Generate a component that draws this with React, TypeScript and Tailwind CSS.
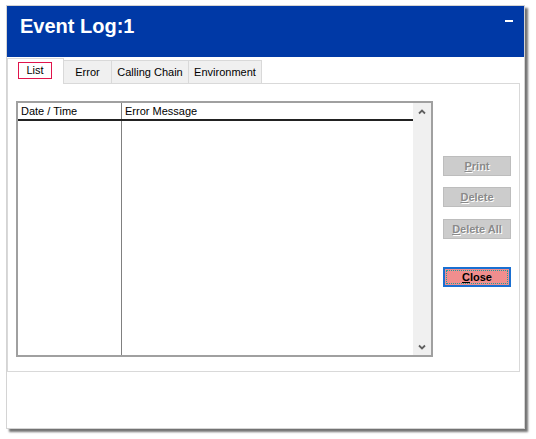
import React from 'react';

const font = { fontFamily: '"Liberation Sans", Arial, sans-serif' };

const Chevron = ({ down }: { down?: boolean }) => (
  <svg width="8" height="6" viewBox="0 0 8 6" className="block">
    <path
      d={down ? 'M1 1.5 L4 4.5 L7 1.5' : 'M1 4.5 L4 1.5 L7 4.5'}
      fill="none"
      stroke="#606060"
      strokeWidth="1.8"
    />
  </svg>
);

const DisabledButton = ({ first, rest }: { first: string; rest: string }) => (
  <button
    disabled
    className="w-[68px] h-[20px] bg-[#cccccc] border border-[#bdbdbd] text-[11px] font-bold text-[#8a8a8a] leading-none [text-shadow:1px_1px_0_#ffffff]"
  >
    <span className="underline">{first}</span>
    {rest}
  </button>
);

const tabs = ['Error', 'Calling Chain', 'Environment'];
const tabWidths = ['w-[49px]', 'w-[78px]', 'w-[74px]'];

export default function App() {
  return (
    <div className="w-[536px] h-[439px] bg-white pt-[5px] pl-[6px]" style={font}>
      <div className="w-[519px] h-[424px] border border-[#d4d4d4] bg-white flex flex-col shadow-[3px_3px_2px_rgba(0,0,0,0.55)]">
        {/* title bar */}
        <div className="h-[51px] bg-[#0039a6] flex justify-between items-start pl-[13px] pr-[11px]">
          <div className="pt-[8px] text-[20px] leading-[24px] font-bold text-white">Event Log:1</div>
          <div className="mt-[14px] w-[8px] h-[2px] bg-white" />
        </div>

        {/* tabs */}
        <div className="h-[26px] flex items-end">
          <div className="relative z-10 -mb-px h-[26px] w-[57px] bg-white border border-b-0 border-[#d9d9d9] flex items-start pt-[3px] pl-[10px]">
            <div className="w-[34px] h-[17px] border border-[#e0144c] flex items-center justify-center text-[11px] text-black">
              List
            </div>
          </div>
          {tabs.map((t, i) => (
            <div
              key={t}
              className={`${tabWidths[i]} -ml-px h-[23px] bg-[#f0f0f0] border border-b-0 border-[#d9d9d9] flex items-center justify-center text-[11px] text-black`}
            >
              {t}
            </div>
          ))}
        </div>

        {/* tab panel */}
        <div className="w-[513px] h-[289px] border border-[#d9d9d9] flex pt-[17px] pl-[8px] pb-[14px]">
          <div className="w-[417px] h-[256px] border-2 border-[#a0a0a0] flex">
            <div className="flex-1 flex flex-col">
              <div className="h-[18px] flex border-b-2 border-[#222222] text-[11px] text-black">
                <div className="w-[104px] border-r border-[#808080] pl-[3px] flex items-center">Date / Time</div>
                <div className="flex-1 pl-[3px] flex items-center">Error Message</div>
              </div>
              <div className="flex-1 flex">
                <div className="w-[104px] border-r border-[#808080]" />
                <div className="flex-1" />
              </div>
            </div>
            <div className="w-[18px] bg-[#f0f0f0] flex flex-col justify-between items-center pt-[6px] pb-[5px]">
              <Chevron />
              <Chevron down />
            </div>
          </div>

          <div className="ml-[10px] pt-[55px] flex flex-col">
            <DisabledButton first="P" rest="rint" />
            <div className="h-[11px]" />
            <DisabledButton first="D" rest="elete" />
            <div className="h-[12px]" />
            <DisabledButton first="D" rest="elete All" />
            <div className="h-[28px]" />
            <button className="w-[68px] h-[20px] bg-[#f08e8e] border-2 border-[#1a6fd1] p-px">
              <div className="h-full border border-dotted border-[#1e9c9c] flex items-center justify-center text-[11px] font-bold text-black leading-none">
                <span className="underline">C</span>lose
              </div>
            </button>
          </div>
        </div>
      </div>
    </div>
  );
}
